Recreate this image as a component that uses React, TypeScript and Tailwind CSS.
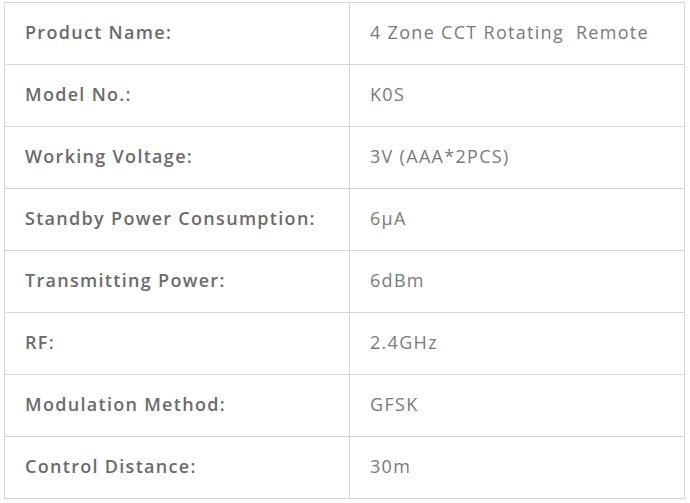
const specs: [string, string][] = [
  ['Product Name:', '4 Zone CCT Rotating\u00a0 Remote'],
  ['Model No.:', 'K0S'],
  ['Working Voltage:', '3V (AAA*2PCS)'],
  ['Standby Power Consumption:', '6μA'],
  ['Transmitting Power:', '6dBm'],
  ['RF:', '2.4GHz'],
  ['Modulation Method:', 'GFSK'],
  ['Control Distance:', '30m'],
]

export default function App() {
  return (
    <div className="bg-white w-[690px] h-[503px] pt-[2px] pl-[4px]" style={{ fontFamily: '"Open Sans", "Liberation Sans", sans-serif' }}>
      <table className="border-collapse w-[681px] table-fixed">
        <tbody>
          {specs.map(([label, value]) => (
            <tr key={label} className="h-[62px]">
              <td className="w-[345px] border border-[#d6d6d6] pl-[20px] pb-[2px] text-[18px] tracking-[1.3px] font-semibold text-[#6b6b6b]">
                {label}
              </td>
              <td className="border border-[#d6d6d6] pl-[20px] pb-[2px] text-[18px] tracking-[1.3px] text-[#7a7a7a]">
                {value}
              </td>
            </tr>
          ))}
        </tbody>
      </table>
    </div>
  )
}
